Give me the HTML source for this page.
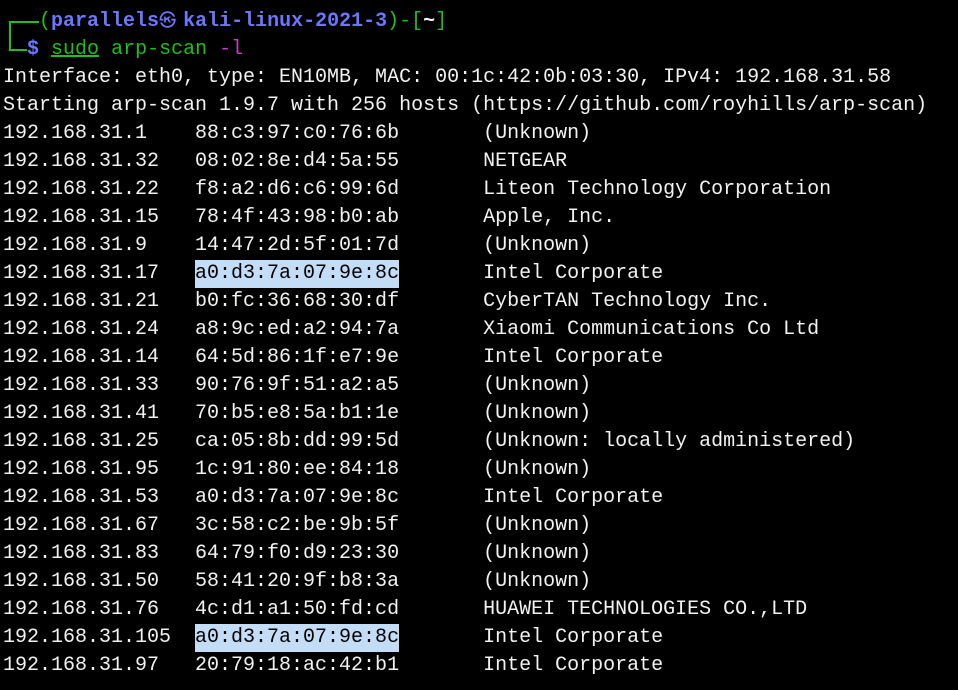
<!DOCTYPE html>
<html><head><meta charset="utf-8"><style>
html,body{margin:0;padding:0;background:#000;width:958px;height:690px;overflow:hidden}
pre{margin:0;position:absolute;left:3px;top:8px;font-family:"Liberation Mono","DejaVu Sans Mono",monospace;font-size:20px;line-height:28px;color:#f2f2f2;white-space:pre}
.g{color:#1fbf1f}.b{color:#6c77ff;font-weight:bold}.p{color:#c53cc5}
.h{background:#c4ddf7;color:#000;display:inline-block;height:28px}
.u{text-decoration:underline}
.k{display:inline-block;width:24px;height:20px;line-height:20px;font-family:'DejaVu Sans',sans-serif;font-size:17px;font-weight:normal}
.ln{position:absolute;background:#1fbf1f}
</style></head><body>
<div class="ln" style="left:9px;top:21px;width:2px;height:30px"></div>
<div class="ln" style="left:9px;top:21px;width:30px;height:2px"></div>
<div class="ln" style="left:9px;top:49px;width:18px;height:2px"></div>
<pre>   <span class="g">(</span><span class="b">parallels<span class="k">㉿</span>kali-linux-2021-3</span><span class="g">)-[</span><span style="font-weight:bold">~</span><span class="g">]</span>
  <span class="b">$</span> <span class="g u">sudo</span><span class="g"> arp-scan</span> <span class="p">-l</span>
Interface: eth0, type: EN10MB, MAC: 00:1c:42:0b:03:30, IPv4: 192.168.31.58
Starting arp-scan 1.9.7 with 256 hosts (https://github.com/royhills/arp-scan)
192.168.31.1    88:c3:97:c0:76:6b       (Unknown)
192.168.31.32   08:02:8e:d4:5a:55       NETGEAR
192.168.31.22   f8:a2:d6:c6:99:6d       Liteon Technology Corporation
192.168.31.15   78:4f:43:98:b0:ab       Apple, Inc.
192.168.31.9    14:47:2d:5f:01:7d       (Unknown)
192.168.31.17   <span class="h">a0:d3:7a:07:9e:8c</span>       Intel Corporate
192.168.31.21   b0:fc:36:68:30:df       CyberTAN Technology Inc.
192.168.31.24   a8:9c:ed:a2:94:7a       Xiaomi Communications Co Ltd
192.168.31.14   64:5d:86:1f:e7:9e       Intel Corporate
192.168.31.33   90:76:9f:51:a2:a5       (Unknown)
192.168.31.41   70:b5:e8:5a:b1:1e       (Unknown)
192.168.31.25   ca:05:8b:dd:99:5d       (Unknown: locally administered)
192.168.31.95   1c:91:80:ee:84:18       (Unknown)
192.168.31.53   a0:d3:7a:07:9e:8c       Intel Corporate
192.168.31.67   3c:58:c2:be:9b:5f       (Unknown)
192.168.31.83   64:79:f0:d9:23:30       (Unknown)
192.168.31.50   58:41:20:9f:b8:3a       (Unknown)
192.168.31.76   4c:d1:a1:50:fd:cd       HUAWEI TECHNOLOGIES CO.,LTD
192.168.31.105  <span class="h">a0:d3:7a:07:9e:8c</span>       Intel Corporate
192.168.31.97   20:79:18:ac:42:b1       Intel Corporate</pre></body></html>
